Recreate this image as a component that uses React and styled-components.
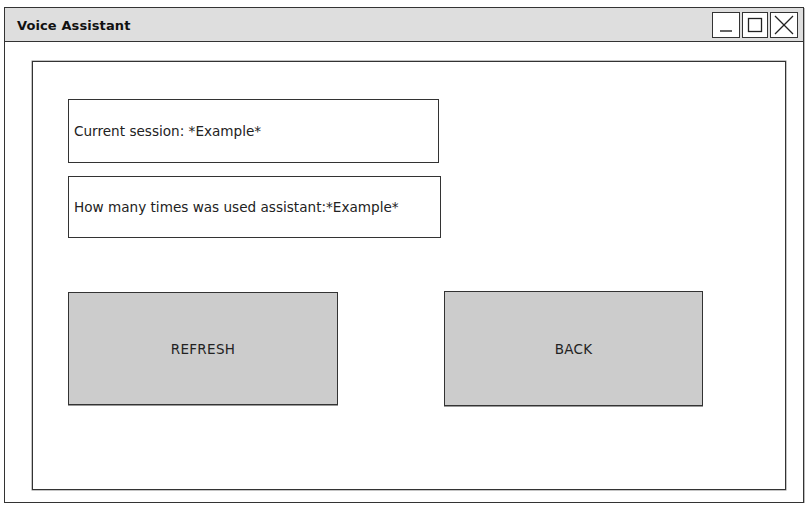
import React from 'react';
import styled, { createGlobalStyle } from 'styled-components';

const GlobalStyle = createGlobalStyle`
    html, body {
        margin: 0;
        padding: 0;
        background: #ffffff;
    }

    body {
        font-family: "DejaVu Sans", "Liberation Sans", sans-serif;
        color: #222222;
    }
`;

const Window = styled.div`
    box-sizing: border-box;
    display: flex;
    flex-direction: column;
    width: 800px;
    height: 496px;
    margin: 7px 0 0 4px;
    border: 1px solid #333333;
    box-shadow: 1px 1px 0 #bbbbbb;
`;

const TitleBar = styled.div`
    box-sizing: border-box;
    display: flex;
    align-items: center;
    justify-content: space-between;
    height: 35px;
    padding: 1px 5px 0 12px;
    background: #dedede;
    border-bottom: 1px solid #333333;
`;

const Title = styled.span`
    font-size: 13px;
    font-weight: bold;
    letter-spacing: 0.1px;
    color: #111111;
`;

const Controls = styled.div`
    display: flex;
    gap: 2px;
`;

const ControlBox = styled.div`
    box-sizing: border-box;
    display: flex;
    align-items: center;
    justify-content: center;
    width: ${({ $width }) => $width}px;
    height: 26px;
    background: #ffffff;
    border: 1px solid #333333;
`;

const Body = styled.div`
    flex: 1;
    display: flex;
    padding: 19px 17px 12px 27px;
`;

const Panel = styled.div`
    box-sizing: border-box;
    display: flex;
    flex-direction: column;
    width: 755px;
    height: 429px;
    padding: 37px 35px;
    border: 1px solid #333333;
    box-shadow: 0 0 0 0.5px #888888;
`;

const InfoBox = styled.div`
    box-sizing: border-box;
    display: flex;
    align-items: center;
    width: ${({ $width }) => $width}px;
    height: ${({ $height }) => $height}px;
    margin-bottom: ${({ $gap }) => $gap}px;
    padding-left: 5px;
    border: 1px solid #333333;
    font-size: 13.6px;
    color: #222222;
`;

const ButtonRow = styled.div`
    display: flex;
    align-items: flex-start;
    gap: 106px;
    margin-top: 53px;
`;

const SketchButton = styled.div`
    box-sizing: border-box;
    display: flex;
    align-items: center;
    justify-content: center;
    width: ${({ $width }) => $width}px;
    height: ${({ $height }) => $height}px;
    margin-top: ${({ $offset }) => $offset}px;
    background: #cccccc;
    border: 1px solid #333333;
    box-shadow: 0 1px 0 #999999;
    font-size: 13.5px;
    letter-spacing: 0.3px;
    color: #222222;
`;

const MinimizeIcon = () => (
    <svg width="18" height="18" viewBox="0 0 18 18">
        <line x1="3" y1="15" x2="15" y2="15" stroke="#222" strokeWidth="1.4" />
    </svg>
);

const MaximizeIcon = () => (
    <svg width="18" height="18" viewBox="0 0 18 18">
        <rect x="2.5" y="2.5" width="13" height="13" fill="none" stroke="#222" strokeWidth="1.3" />
    </svg>
);

const CloseIcon = () => (
    <svg width="22" height="22" viewBox="0 0 22 22">
        <line x1="2" y1="2" x2="20" y2="20" stroke="#222" strokeWidth="1.2" />
        <line x1="20" y1="2" x2="2" y2="20" stroke="#222" strokeWidth="1.2" />
    </svg>
);

const App = () => (
    <>
        <GlobalStyle />
        <Window>
            <TitleBar>
                <Title>Voice Assistant</Title>
                <Controls>
                    <ControlBox $width={28}><MinimizeIcon /></ControlBox>
                    <ControlBox $width={26}><MaximizeIcon /></ControlBox>
                    <ControlBox $width={28}><CloseIcon /></ControlBox>
                </Controls>
            </TitleBar>
            <Body>
                <Panel>
                    <InfoBox $width={371} $height={64} $gap={13}>
                        Current session: *Example*
                    </InfoBox>
                    <InfoBox $width={373} $height={62} $gap={0}>
                        How many times was used assistant:*Example*
                    </InfoBox>
                    <ButtonRow>
                        <SketchButton $width={270} $height={113} $offset={1}>
                            REFRESH
                        </SketchButton>
                        <SketchButton $width={259} $height={115} $offset={0}>
                            BACK
                        </SketchButton>
                    </ButtonRow>
                </Panel>
            </Body>
        </Window>
    </>
);

export default App;
